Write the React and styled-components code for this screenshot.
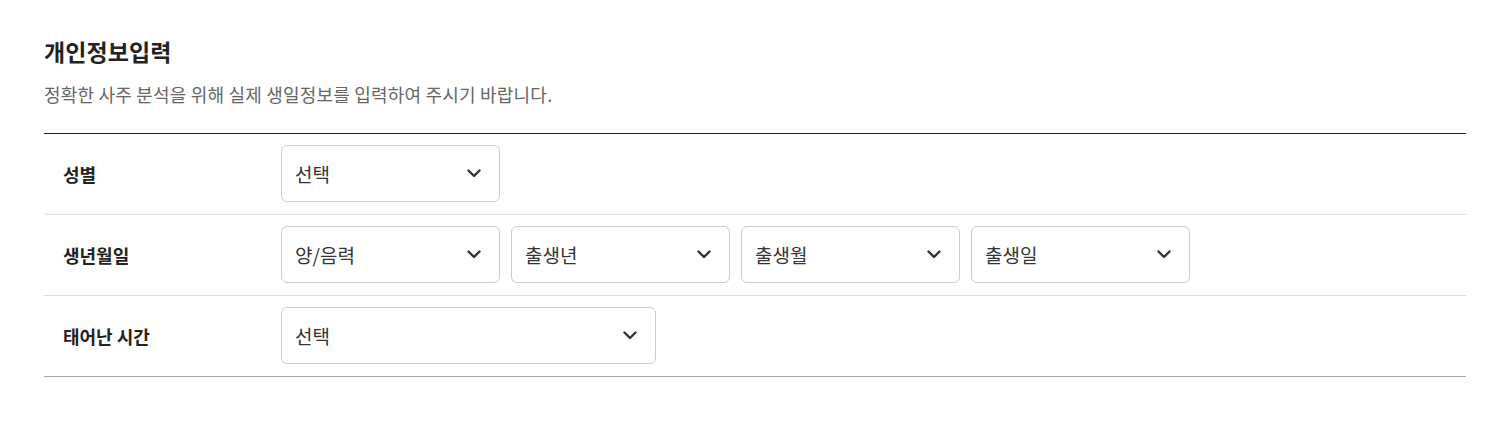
import React from "react";
import styled, { createGlobalStyle } from "styled-components";

const Global = createGlobalStyle`
  html, body { margin: 0; padding: 0; background: #fff; }
  body { font-family: "Noto Sans CJK KR", "Noto Sans", sans-serif; color: #222; }
  * { box-sizing: border-box; }
`;

const Section = styled.section`
  padding: 33px 39px 0 44px;
`;

const Title = styled.h2`
  margin: 0;
  font-size: 23px;
  line-height: 36px;
  font-weight: 700;
  color: #222;
  letter-spacing: 0.1px;
`;

const Desc = styled.p`
  margin: 11px 0 0;
  font-size: 18px;
  line-height: 28px;
  color: #666;
  letter-spacing: 0.2px;
`;

const Table = styled.div`
  margin-top: 25px;
  border-top: 1px solid #222;
  border-bottom: 1px solid #aaa;
`;

const Row = styled.div`
  box-sizing: content-box;
  display: grid;
  grid-template-columns: 237px 1fr;
  align-items: start;
  height: 69px;
  padding-top: 11px;
  & + & { border-top: 1px solid #ddd; }
`;

const Label = styled.div`
  align-self: center;
  margin-top: -11px;
  padding-left: 19px;
  font-size: 18px;
  font-weight: 700;
  color: #222;
`;

const Fields = styled.div`
  display: flex;
  gap: 11.5px;
`;

const Select = styled.button`
  display: flex;
  align-items: center;
  justify-content: space-between;
  width: ${(p) => p.$w || 218.5}px;
  height: 57px;
  padding: 0 18px 0 13px;
  border: 1px solid #ccc;
  border-radius: 6px;
  background: #fff;
  font-family: inherit;
  font-size: 19px;
  color: #333;
  cursor: pointer;
`;

const Chevron = () => (
  <svg width="14" height="9" viewBox="0 0 14 9" fill="none">
    <path d="M1.5 1.5 L7 7 L12.5 1.5" stroke="#333" strokeWidth="2.4" strokeLinecap="round" strokeLinejoin="round" />
  </svg>
);

const Dropdown = ({ children, w }) => (
  <Select $w={w}>
    <span>{children}</span>
    <Chevron />
  </Select>
);

export default function App() {
  return (
    <>
      <Global />
      <Section>
        <Title>개인정보입력</Title>
        <Desc>정확한 사주 분석을 위해 실제 생일정보를 입력하여 주시기 바랍니다.</Desc>
        <Table>
          <Row>
            <Label>성별</Label>
            <Fields>
              <Dropdown>선택</Dropdown>
            </Fields>
          </Row>
          <Row>
            <Label>생년월일</Label>
            <Fields>
              <Dropdown>양/음력</Dropdown>
              <Dropdown>출생년</Dropdown>
              <Dropdown>출생월</Dropdown>
              <Dropdown>출생일</Dropdown>
            </Fields>
          </Row>
          <Row>
            <Label>태어난 시간</Label>
            <Fields>
              <Dropdown w={375}>선택</Dropdown>
            </Fields>
          </Row>
        </Table>
      </Section>
    </>
  );
}
